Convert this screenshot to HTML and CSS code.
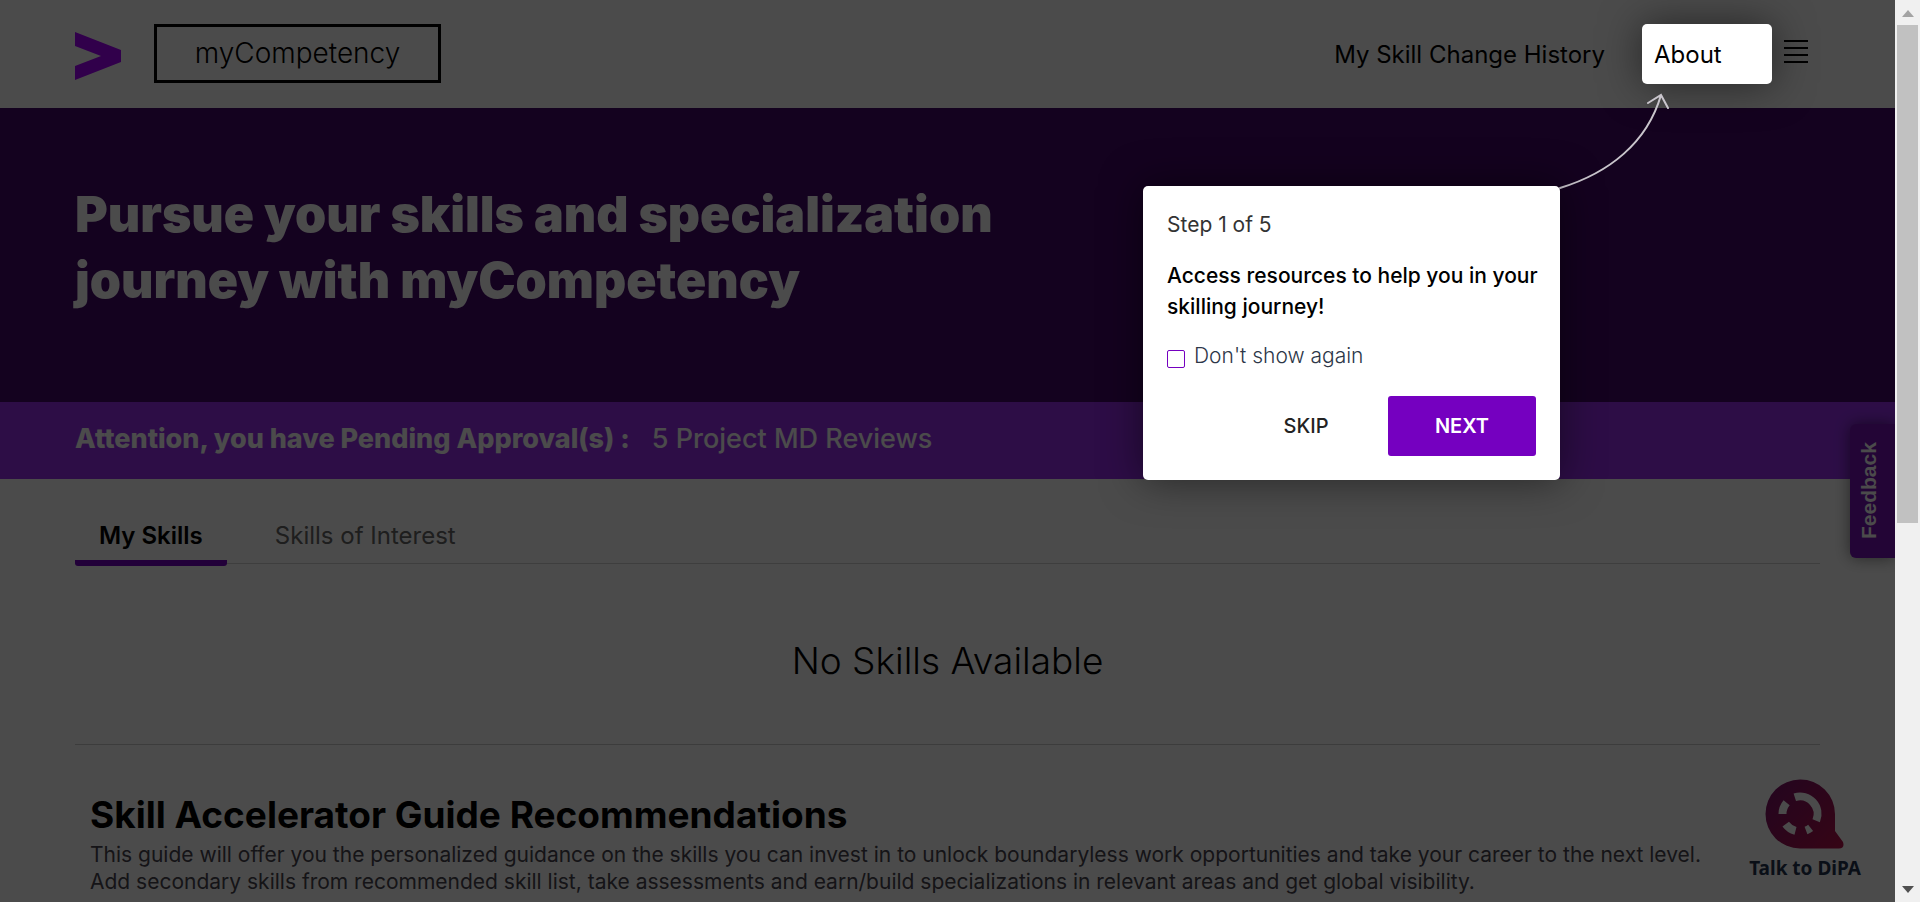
FILE: index.html
```html
<!DOCTYPE html>
<html lang="en">
<head>
<meta charset="utf-8">
<title>myCompetency</title>
<link rel="stylesheet" href="styles.css">
</head>
<body>
<div class="page">
  <header class="header">
    <a class="logo" href="#" aria-label="Home">
      <svg width="46" height="48" viewBox="0 0 46 48"><path d="M0 0L46 18V30L0 48V34L26 24L0 14Z" fill="#a800ff"/></svg>
    </a>
    <a class="brand" href="#">myCompetency</a>
    <nav class="nav">
      <a class="nav-link" href="#">My Skill Change History</a>
      <a class="nav-link nav-link-active" href="#">About</a>
      <button class="menu" type="button" aria-label="Menu"><span></span><span></span><span></span><span></span></button>
    </nav>
  </header>
  <section class="hero">
    <h1>Pursue your skills and specialization journey with myCompetency</h1>
  </section>
  <section class="notice">
    <strong>Attention, you have Pending Approval(s) :</strong>
    <a href="#">5 Project MD Reviews</a>
  </section>
  <main class="main">
    <div class="tabs">
      <button class="tab tab-active" type="button">My Skills</button>
      <button class="tab" type="button">Skills of Interest</button>
    </div>
    <p class="empty">No Skills Available</p>
    <section class="guide">
      <h2>Skill Accelerator Guide Recommendations</h2>
      <p>This guide will offer you the personalized guidance on the skills you can invest in to unlock boundaryless work opportunities and take your career to the next level.<br>Add secondary skills from recommended skill list, take assessments and earn/build specializations in relevant areas and get global visibility.</p>
    </section>
  </main>
  <button class="feedback" type="button">Feedback</button>
  <a class="dipa" href="#">
    <svg width="80" height="70" viewBox="0 0 80 70">
      <defs><linearGradient id="dipa-fill" x1="0" y1="0.2" x2="1" y2="1"><stop offset="0" stop-color="#7c1068"/><stop offset="0.5" stop-color="#9a1458"/><stop offset="1" stop-color="#b8144a"/></linearGradient></defs>
      <path d="M35 0.500A34.500 34.500 0 0 1 70 35V52L78 63Q80 69 74 69.500H35A34.500 34.500 0 0 1 35 0.500Z" fill="url(#dipa-fill)"/>
      <g fill="none" stroke="#fff" stroke-width="8">
        <path d="M29.800 18.300A17.500 17.500 0 0 1 51.200 41.800"/>
        <path d="M17.500 35A17.500 17.500 0 0 1 21.600 23.700"/>
        <path d="M20.700 45.200A17.500 17.500 0 0 0 30.500 51.900"/>
        <path d="M41 51.400A17.500 17.500 0 0 0 45.600 48.800"/>
      </g>
    </svg>
    <span>Talk to DiPA</span>
  </a>
  <div class="dim"></div>
  <svg class="pointer" width="116" height="100" viewBox="0 0 116 100" fill="none" stroke="#c9c5cc" stroke-width="2" stroke-linecap="round"><path d="M1 97C50 82 88 52 102 4M89 12L102 4L109 17"/></svg>
  <section class="tour" role="dialog" aria-label="Tour">
    <p class="tour-step">Step 1 of 5</p>
    <p class="tour-text">Access resources to help you in your skilling journey!</p>
    <label class="tour-check"><input type="checkbox">Don't show again</label>
    <div class="tour-actions">
      <button class="btn" type="button">SKIP</button>
      <button class="btn btn-primary" type="button">NEXT</button>
    </div>
  </section>
</div>
<div class="scrollbar">
  <svg width="12" height="7" viewBox="0 0 12 7"><path d="M0 7L6 0L12 7Z" fill="#a3a3a3"/></svg>
  <div class="thumb"></div>
  <svg width="12" height="7" viewBox="0 0 12 7"><path d="M0 0L6 7L12 0Z" fill="#505050"/></svg>
</div>
</body>
</html>
```
FILE: styles.css
```css
* { box-sizing: border-box; }
body {
  margin: 0;
  height: 100vh;
  overflow: hidden;
  display: flex;
  background: #fff;
  color: #000;
  font-family: Inter, "Open Sans", sans-serif;
}
h1, h2, p { margin: 0; }
a { color: inherit; text-decoration: none; }
button { font-family: inherit; border: 0; background: none; padding: 0; color: inherit; }

.page { position: relative; flex: 1; min-width: 0; overflow: hidden; }

.header { display: flex; align-items: center; height: 108px; padding: 0 75px; }
.logo { display: flex; margin: 4px 33px 0 0; }
.brand {
  display: flex; align-items: center; justify-content: center;
  width: 287px; height: 59px; margin-bottom: 2px;
  border: 3px solid #000;
  font-size: 28px; font-weight: 300;
}
.nav { display: flex; align-items: center; margin-left: auto; }
.nav-link { font-size: 24px; font-weight: 400; }
.nav-link-active {
  position: relative; z-index: 3;
  display: flex; align-items: center;
  width: 130px; height: 60px;
  margin: 0 12px 0 37px; padding-left: 12px;
  background: #fff; border-radius: 5px;
  box-shadow: 0 0 40px rgba(0, 0, 0, .5);
}
.menu { display: flex; flex-direction: column; gap: 5px; width: 24px; margin: 0 12px 6px 0; }
.menu span { height: 2px; background: #000; }

.hero {
  height: 294px; padding: 73px 75px 0;
  background: #460a6b; color: #fff;
}
.hero h1 { max-width: 980px; font-size: 50px; font-weight: 900; line-height: 66px; }

.notice {
  display: flex; align-items: center; gap: 22px;
  height: 77px; padding: 0 75px 4px;
  background: #992fef; color: #fff;
  font-size: 27px;
}
.notice strong { font-weight: 800; }
.notice a { font-weight: 500; }

.main { padding: 30px 75px 0; }
.tabs { display: flex; gap: 24px; height: 55px; border-bottom: 1px solid #d4d4d4; }
.tab {
  height: 57px; padding: 2px 24px 0;
  border-bottom: 6px solid transparent;
  font-size: 24px; font-weight: 400; color: #666;
}
.tab-active { border-color: #7500c0; border-radius: 3px; font-weight: 600; color: #000; }
.empty {
  padding: 73px 0 59px; border-bottom: 1px solid #ccc;
  font-size: 37px; line-height: 48px; font-weight: 300; text-align: center;
}
.guide { padding: 46px 15px 0; }
.guide h2 { margin-bottom: 2px; font-size: 37px; line-height: 48px; font-weight: 700; }
.guide p { font-size: 21px; line-height: 27px; font-weight: 400; color: #4a4650; white-space: nowrap; }

.feedback {
  position: absolute; right: 0; top: 424px;
  display: flex; align-items: center; justify-content: center;
  width: 45px; height: 134px; padding-left: 7px;
  border-radius: 0 6px 6px 0;
  background: #7814b7; color: #fff;
  box-shadow: 0 0 16px rgba(0, 0, 0, .5);
  font: bold 21px "Liberation Sans", Arial, sans-serif;
  writing-mode: vertical-rl; transform: rotate(180deg);
}

.dipa {
  position: absolute; right: 34px; top: 779px;
  display: flex; flex-direction: column; align-items: center;
  color: #253450;
  font: bold 19px/24px "Noto Sans", sans-serif;
}
.dipa svg { margin-bottom: 7px; }

.dim { position: absolute; inset: 0; z-index: 2; background: rgba(0, 0, 0, .705); }

.pointer { position: absolute; z-index: 4; right: 220px; top: 91px; }

.tour {
  position: absolute; z-index: 4; right: 335px; top: 186px;
  width: 417px; padding: 24px;
  background: #fff; border-radius: 5px;
  box-shadow: 0 0 40px rgba(0, 0, 0, .5);
  font-size: 21px;
}
.tour-step { margin-bottom: 20px; line-height: 30px; font-weight: 400; color: #333; }
.tour-text { margin: 0 -8px 18px 0; line-height: 31px; font-weight: 500; }
.tour-check { display: flex; align-items: center; gap: 9px; height: 30px; margin-bottom: 26px; font-weight: 300; color: #2d3748; }
.tour-check input {
  appearance: none; width: 18px; height: 18px; margin: 8px 0 0;
  border: 1px solid #7500c0; border-radius: 2px;
}
.tour-actions { display: flex; justify-content: flex-end; gap: 8px; }
.btn { width: 148px; height: 60px; border-radius: 3px; font-size: 20px; font-weight: 500; color: #222; }
.btn-primary { background: #7500c0; color: #fff; font-weight: 600; }

.scrollbar {
  display: flex; flex-direction: column; align-items: center;
  width: 25px; padding: 10px 0 9px;
  background: #f0f0f0;
}
.thumb { width: 21px; height: 498px; margin: 8px 0 auto; background: #c1c1c1; }
```
